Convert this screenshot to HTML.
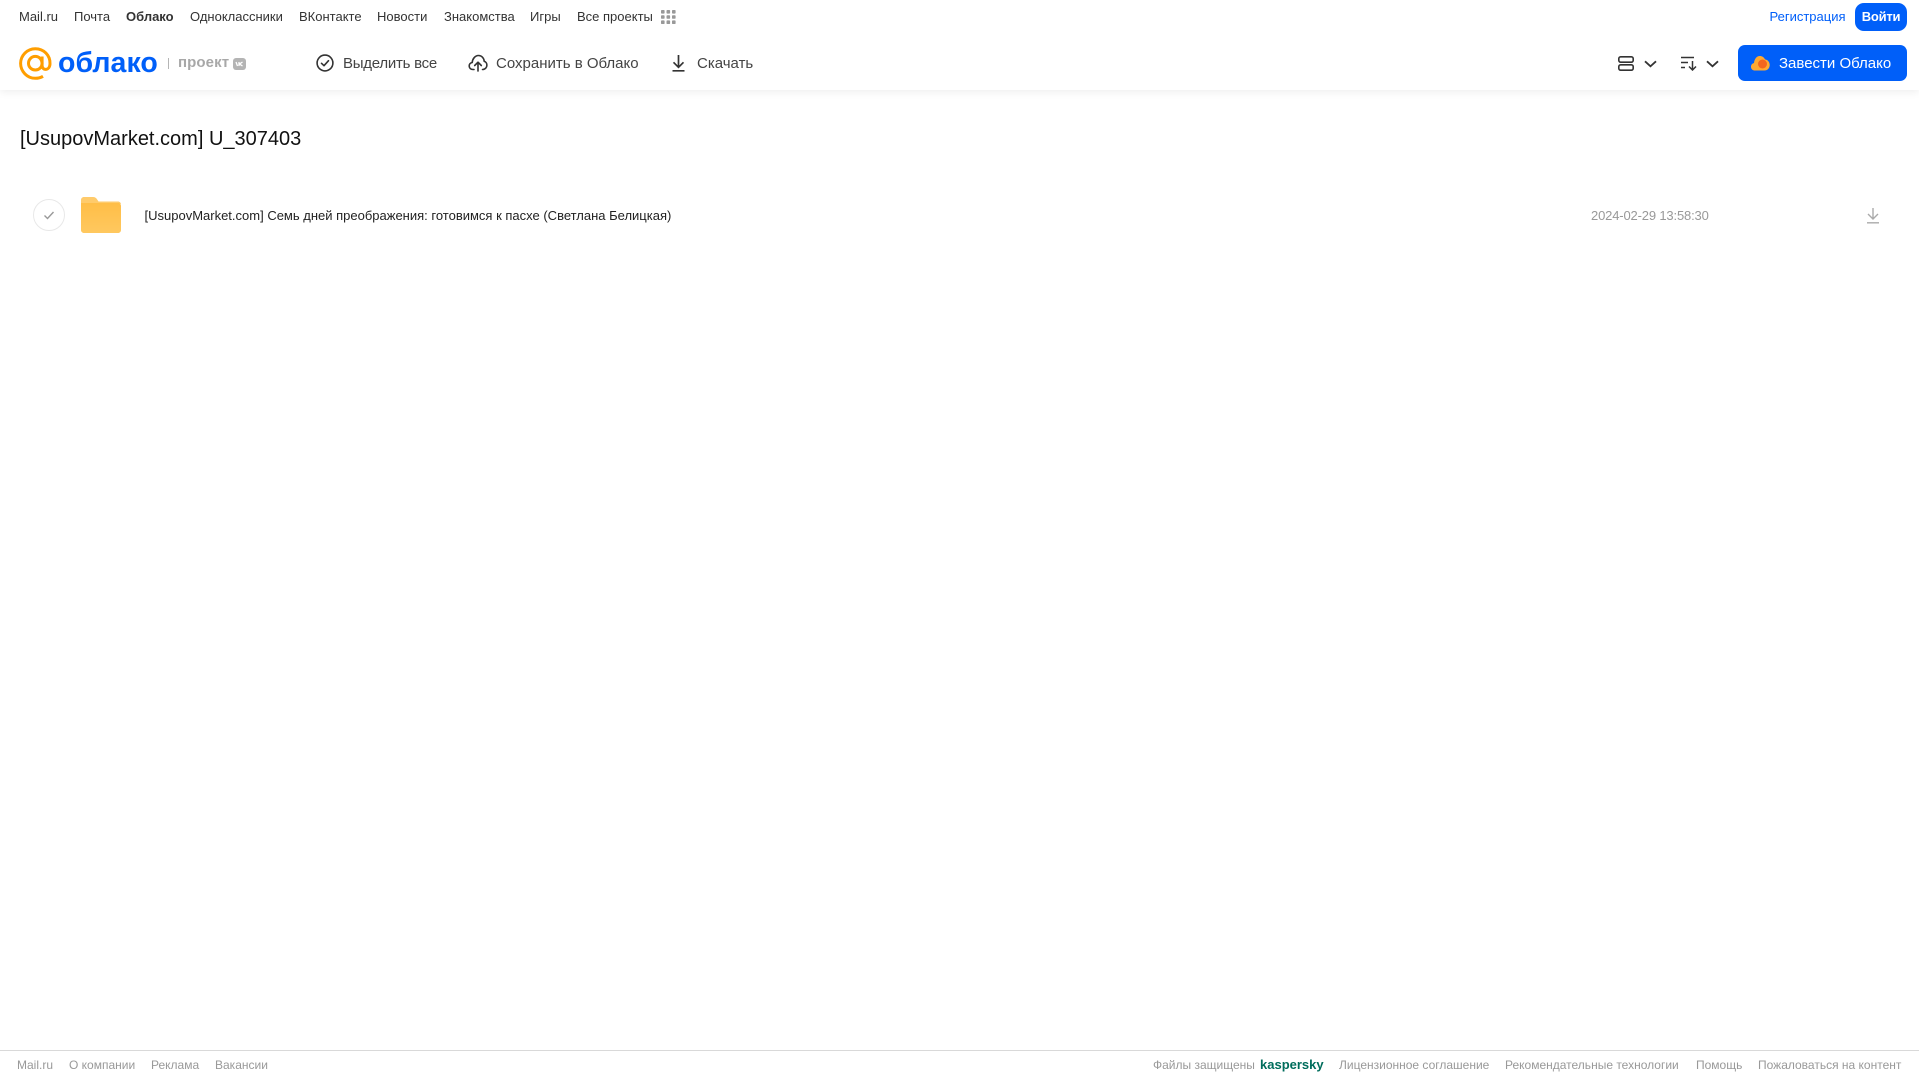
<!DOCTYPE html>
<html lang="ru">
<head>
<meta charset="utf-8">
<title>Облако</title>
<style>
html,body{margin:0;padding:0;background:#fff}
body{width:1919px;height:1079px;position:relative;overflow:hidden;font-family:"Liberation Sans","Noto Sans CJK JP",sans-serif}
.t{position:absolute;white-space:nowrap;line-height:20px}
.n{top:7px;font-size:13px;color:#333}
.b{top:54px;font-size:15px;color:#444}
.f{top:1055px;font-size:12px;color:#999}
svg{position:absolute;display:block}
</style>
</head>
<body>
<div style="position:absolute;left:0;top:0;width:1919px;height:90px;background:#fff;box-shadow:0 2px 8px rgba(0,0,0,.07)"></div>

<span class="t n" style="left:19px">Mail.ru</span>
<span class="t n" style="left:74px">Почта</span>
<span class="t n" style="left:126px;font-weight:bold">Облако</span>
<span class="t n" style="left:190px">Одноклассники</span>
<span class="t n" style="left:299px">ВКонтакте</span>
<span class="t n" style="left:377px">Новости</span>
<span class="t n" style="left:444px">Знакомства</span>
<span class="t n" style="left:530px">Игры</span>
<span class="t n" style="left:577px">Все проекты</span>
<svg style="left:661px;top:10px" width="15" height="14" viewBox="0 0 15 14" fill="#999"><rect x="0" y="0" width="3.6" height="3.6" rx=".8"/><rect x="5.5" y="0" width="3.6" height="3.6" rx=".8"/><rect x="11" y="0" width="3.6" height="3.6" rx=".8"/><rect x="0" y="5.2" width="3.6" height="3.6" rx=".8"/><rect x="5.5" y="5.2" width="3.6" height="3.6" rx=".8"/><rect x="11" y="5.2" width="3.6" height="3.6" rx=".8"/><rect x="0" y="10.4" width="3.6" height="3.6" rx=".8"/><rect x="5.5" y="10.4" width="3.6" height="3.6" rx=".8"/><rect x="11" y="10.4" width="3.6" height="3.6" rx=".8"/></svg>

<span class="t" style="left:1769.500px;top:7px;font-size:13px;color:#005ff9">Регистрация</span>
<div style="position:absolute;left:1855px;top:3px;width:52px;height:28px;border-radius:9px;background:#005ff9;color:#fff;font-size:13px;font-weight:bold;line-height:27px;text-align:center;letter-spacing:-.25px">Войти</div>

<svg style="left:19px;top:47px" width="33" height="33" viewBox="0 0 33 33" fill="none" stroke="#ff9e00" stroke-width="3"><circle cx="16.300" cy="16.200" r="6.800"/><path d="M23.100 9.500v9c0 5.400 7.500 5.400 7.900-1.600C31.400 8.200 24.700 1.700 16.300 1.700 8.300 1.700 1.600 8.300 1.600 16.400S8.300 31.300 16.300 31.300c3 0 5.500-.7 7.700-2"/></svg>
<span class="t" style="left:58px;top:47px;font-size:28.500px;line-height:32px;font-weight:bold;color:#005ff9;letter-spacing:.05px">облако</span>
<div style="position:absolute;left:168px;top:58px;width:1px;height:11px;background:#b5b5b5"></div>
<span class="t" style="left:178px;top:53px;font-size:15px;font-weight:bold;color:#a8a8a8;letter-spacing:.1px">проект</span>
<div style="position:absolute;left:233px;top:58px;width:13px;height:12px;border-radius:3px;background:#b4b4b4"></div>
<svg style="left:233px;top:58px" width="13" height="12" viewBox="0 0 13 12" fill="none" stroke="#fff" stroke-width="1.300"><path d="M3 4l1.500 4M6 4v4M9.500 4L6.500 6l3 2"/></svg>

<svg style="left:316px;top:54px" width="18" height="18" viewBox="0 0 18 18" fill="none" stroke="#333" stroke-width="1.600"><circle cx="9" cy="9" r="7.900"/><path d="M5.500 9.300l2.500 2.400 4.500-5" stroke-linecap="round" stroke-linejoin="round"/></svg>
<span class="t b" style="left:343px;letter-spacing:-.25px">Выделить все</span>

<svg style="left:468px;top:54px" width="20" height="18" viewBox="0 0 20 18" fill="none" stroke="#333" stroke-width="1.600" stroke-linecap="round" stroke-linejoin="round"><path d="M6 15.500H5C2.700 15.500 1.200 14 1.200 12c0-1.800 1.200-3.200 3-3.500C4.500 5 7 1.500 10.500 1.500c3.300 0 5.500 2.700 5.700 5.800 1.600.4 2.700 2 2.700 3.800 0 2.400-1.700 4.400-4.400 4.400"/><path d="M10 17V8.500M6.700 11.500L10 8.200l3.300 3.300"/></svg>
<span class="t b" style="left:496px">Сохранить в Облако</span>

<svg style="left:671px;top:54px" width="15" height="18" viewBox="0 0 15 18" fill="none" stroke="#333" stroke-width="1.700"><path d="M7.500 1v12M2.500 8.300l5 5 5-5M1.500 16.800h12"/></svg>
<span class="t b" style="left:697px">Скачать</span>

<svg style="left:1618px;top:56px" width="16" height="15" viewBox="0 0 16 15" fill="none" stroke="#333" stroke-width="1.600"><rect x=".8" y=".8" width="14.400" height="5.400" rx="1.800"/><rect x=".8" y="8.800" width="14.400" height="5.400" rx="1.800"/></svg>
<svg style="left:1644px;top:60px" width="13" height="8" viewBox="0 0 13 8" fill="none" stroke="#333" stroke-width="1.800"><path d="M1 1.300l5.500 5 5.500-5"/></svg>
<svg style="left:1681px;top:56px" width="17" height="15" viewBox="0 0 17 15" fill="none" stroke="#333" stroke-width="1.500"><path d="M0 1.500h13M0 6.500h7M0 11.500h4M11.500 5v9M8 10.500l3.500 3.500 3.500-3.500"/></svg>
<svg style="left:1706px;top:60px" width="13" height="8" viewBox="0 0 13 8" fill="none" stroke="#333" stroke-width="1.800"><path d="M1 1.300l5.500 5 5.500-5"/></svg>

<div style="position:absolute;left:1738px;top:45px;width:169px;height:36px;border-radius:7px;background:#005ff9"></div>
<svg style="left:1751px;top:55px" width="19" height="16" viewBox="0 0 19 16"><path d="M4 15.500C1.700 15.500 0 14 0 11.700 0 9.800 1.200 8.400 3 8c.4-4 2.700-7 5.700-7 2.500 0 4.300 1.200 5.300 3.400 2.700.3 4.700 2.700 4.700 5.600 0 3.200-2.300 5.500-5.200 5.500z" fill="#ffa930"/><circle cx="11.500" cy="9" r="4.500" fill="#f3661e"/></svg>
<span class="t" style="left:1779px;top:54px;font-size:15px;color:#fff">Завести Облако</span>

<span class="t" style="left:20px;top:127px;font-size:20px;line-height:24px;color:#111">[UsupovMarket.com] U_307403</span>

<svg style="left:33px;top:199px" width="32" height="32" viewBox="0 0 32 32" fill="none"><circle cx="16" cy="16" r="15.500" stroke="#e8e8e8"/><path d="M11.500 16.500l3 3 6-6.500" stroke="#999" stroke-width="1.400"/></svg>
<svg style="left:81px;top:197px" width="40" height="36" viewBox="0 0 40 36"><defs><linearGradient id="g" x1="0" y1="0" x2="0" y2="1"><stop offset="0" stop-color="#ffbe47"/><stop offset="1" stop-color="#ffc85f"/></linearGradient></defs><path d="M0 3C0 1.300 1.300 0 3 0h9c2 0 3 .8 4 2.200L17.500 4.500H37c1.700 0 3 1.300 3 3V7H0z" fill="#ffcb6b"/><path d="M0 6h37c1.700 0 3 1.300 3 3v24c0 1.700-1.300 3-3 3H3c-1.700 0-3-1.300-3-3z" fill="url(#g)"/></svg>

<span class="t" style="left:144.500px;top:206px;font-size:13px;color:#222">[UsupovMarket.com] Семь дней преображения: готовимся к пасхе (Светлана Белицкая)</span>
<span class="t" style="left:1591px;top:206px;font-size:13px;color:#999;letter-spacing:-.16px">2024-02-29 13:58:30</span>
<svg style="left:1866px;top:207px" width="14" height="17" viewBox="0 0 14 17" fill="none" stroke="#aaa" stroke-width="1.400"><path d="M7 1v10.500M2 7l5 5 5-5M1 15.800h12"/></svg>

<div style="position:absolute;left:0;top:1050px;width:1919px;height:1px;background:#d9d9d9"></div>
<span class="t f" style="left:17px">Mail.ru</span>
<span class="t f" style="left:69px">О компании</span>
<span class="t f" style="left:151px">Реклама</span>
<span class="t f" style="left:215px">Вакансии</span>
<span class="t f" style="left:1153px">Файлы защищены</span>
<span class="t f" style="left:1260px;font-size:13px;font-weight:bold;color:#006d5c">kaspersky</span>
<span class="t f" style="left:1339px">Лицензионное соглашение</span>
<span class="t f" style="left:1505px">Рекомендательные технологии</span>
<span class="t f" style="left:1696px">Помощь</span>
<span class="t f" style="left:1758px">Пожаловаться на контент</span>
</body>
</html>
